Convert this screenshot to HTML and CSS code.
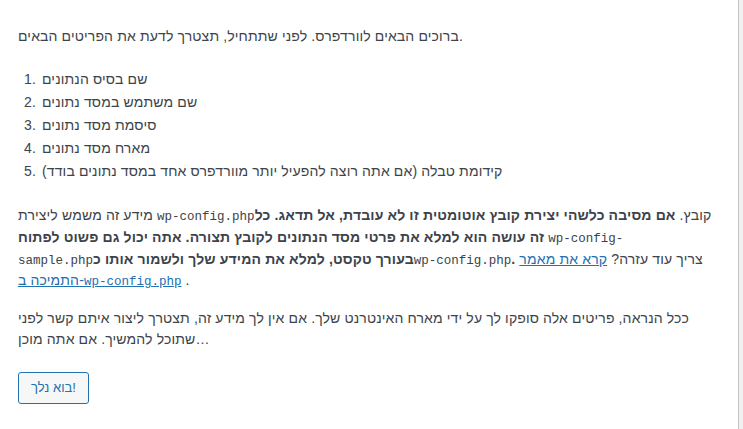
FILE: index.html
```html
<!DOCTYPE html>
<html lang="he">
<head>
  <meta charset="UTF-8" />
  <title>WordPress &rsaquo; קובץ הגדרות</title>
  <link rel="stylesheet" href="styles.css">
</head>
<body>
  <div class="setup">
    <p>ברוכים הבאים לוורדפרס. לפני שתתחיל, תצטרך לדעת את הפריטים הבאים.</p>
    <ol>
      <li>שם בסיס הנתונים</li>
      <li>שם משתמש במסד נתונים</li>
      <li>סיסמת מסד נתונים</li>
      <li>מארח מסד נתונים</li>
      <li>קידומת טבלה (אם אתה רוצה להפעיל יותר מוורדפרס אחד במסד נתונים בודד)</li>
    </ol>
    <p>מידע זה משמש ליצירת <code>wp-config.php</code>קובץ. <strong>אם מסיבה כלשהי יצירת קובץ אוטומטית זו לא עובדת, אל תדאג. כל זה עושה הוא למלא את פרטי מסד הנתונים לקובץ תצורה. אתה יכול גם פשוט לפתוח <code>wp-config-sample.php</code>בעורך טקסט, למלא את המידע שלך ולשמור אותו כ<code>wp-config.php</code>.</strong> צריך עוד עזרה? <a href="#">קרא את מאמר התמיכה ב-<code>wp-config.php</code></a> .</p>
    <p>ככל הנראה, פריטים אלה סופקו לך על ידי מארח האינטרנט שלך. אם אין לך מידע זה, תצטרך ליצור איתם קשר לפני שתוכל להמשיך. אם אתה מוכן&hellip;</p>
    <p class="step"><a href="#" class="button">בוא נלך!</a></p>
  </div>
</body>
</html>
```

FILE: styles.css
```css
html {
  background: #f0f0f1;
}
body {
  margin: 0;
  color: #3c434a;
  font-family: "Liberation Sans", sans-serif;
}
.setup {
  width: 700px;
  padding: 12px 20px 10px 18px;
  background: #fff;
  border-right: 1px solid #c3c4c7;
  border-bottom: 1px solid #c3c4c7;
}
p, li {
  padding-bottom: 2px;
  font-size: 14px;
  line-height: 1.5;
  letter-spacing: 0.14px;
}
p {
  margin: 14px 0;
}
ol {
  margin: 15px 0 16px;
  padding: 5px 5px 5px 22px;
}
li {
  padding-left: 2px;
}
a {
  color: #2271b1;
}
code {
  font-family: "Liberation Mono", monospace;
  font-size: 12.5px;
  font-weight: normal;
  letter-spacing: 0;
}
.step {
  margin: 20px 0 15px;
  padding: 0;
}
.button {
  display: inline-block;
  min-height: 32px;
  line-height: 30px;
  padding: 0 12px;
  box-sizing: border-box;
  font-size: 13px;
  letter-spacing: 0;
  color: #2271b1;
  text-decoration: none;
  background: #f6f7f7;
  border: 1px solid #2271b1;
  border-radius: 3px;
}
```
